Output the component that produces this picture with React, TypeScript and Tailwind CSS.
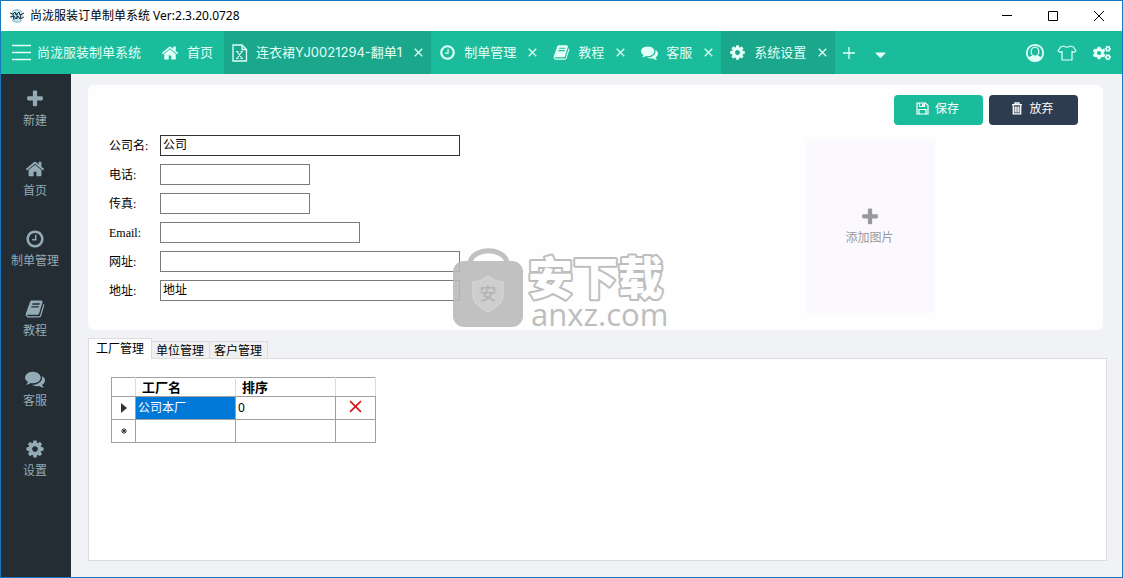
import { useState, type ReactNode } from "react";
import { FaCogs, FaCaretDown } from "react-icons/fa";

const PATHS = {
  plus: "M1600 736v192q0 40-28 68t-68 28h-416v416q0 40-28 68t-68 28h-192q-40 0-68-28t-28-68v-416h-416q-40 0-68-28t-28-68v-192q0-40 28-68t68-28h416v-416q0-40 28-68t68-28h192q40 0 68 28t28 68v416h416q40 0 68 28t28 68z",
  home: "M1472 992v480q0 26-19 45t-45 19h-384v-384h-256v384h-384q-26 0-45-19t-19-45v-480q0-1 .5-3t.5-3l575-474 575 474q1 2 1 6zm223-69l-62 74q-8 9-21 11h-3q-13 0-21-7l-692-577-692 577q-12 8-24 7-13-2-21-11l-62-74q-8-10-7-23.5t11-21.5l719-599q32-26 76-26t76 26l244 204v-195q0-14 9-23t23-9h192q14 0 23 9t9 23v408l219 182q10 8 11 21.5t-7 23.5z",
  clock: "M1024 544v448q0 14-9 23t-23 9h-320q-14 0-23-9t-9-23v-64q0-14 9-23t23-9h224v-352q0-14 9-23t23-9h64q14 0 23 9t9 23zm416 352q0-148-73-273t-198-198-273-73-273 73-198 198-73 273 73 273 198 198 273 73 273-73 198-198 73-273zm224 0q0 209-103 385.5t-279.5 279.5-385.5 103-385.5-103-279.5-279.5-103-385.5 103-385.5 279.5-279.5 385.5-103 385.5 103 279.5 279.5 103 385.5z",
  book: "M1703 478q40 57 18 129l-275 906q-19 64-76.5 107.5t-122.5 43.5h-923q-77 0-148.5-53.5t-99.5-131.5q-24-67-2-127 0-4 3-27t4-37q1-8-3-21.5t-3-19.5q2-11 8-21t16.5-23.5 16.5-23.5q23-38 45-91.5t30-91.5q3-10 .5-30t-.5-28q3-11 17-28t17-23q21-36 42-92t25-90q1-9-2.5-32t.5-28q4-13 22-30.5t22-22.5q19-26 42.5-84.5t27.5-96.5q1-8-3-25.5t-2-26.5q2-8 9-18t18-23 17-21q8-12 16.5-30.5t15-35 16-36 19.5-32 26.5-23.5 36-11.5 47.5 5.5l-1 3q38-9 51-9h761q74 0 114 56t18 130l-274 906q-36 119-71.5 153.5t-128.5 34.5h-869q-27 0-38 15-11 16-1 43 24 70 144 70h923q29 0 56-15.5t35-41.5l300-987q7-22 5-57 38 15 59 43zm-1064 2q-4 13 2 22.5t20 9.5h608q13 0 25.5-9.5t16.5-22.5l21-64q4-13-2-22.5t-20-9.5h-608q-13 0-25.5 9.5t-16.5 22.5zm-83 256q-4 13 2 22.5t20 9.5h608q13 0 25.5-9.5t16.5-22.5l21-64q4-13-2-22.5t-20-9.5h-608q-13 0-25.5 9.5t-16.5 22.5z",
  comments: "M1408 768q0 139-94 257t-256.5 186.5-353.5 68.5q-86 0-176-16-124 88-278 128-36 9-86 16h-3q-11 0-20.5-8t-11.5-21q-1-3-1-6.5t.5-6.5 2-6l2.5-5 3.5-5.5 4-5 4.5-5 4-4.5q5-6 23-25t26-29.5 22.5-29 25-38.5 20.5-44q-124-72-195-177t-71-224q0-139 94-257t256.5-186.5 353.5-68.5 353.5 68.5 256.5 186.5 94 257zm384 256q0 120-71 224.5t-195 176.5q10 24 20.5 44t25 38.5 22.5 29 26 29.5 23 25q1 1 4 4.5t4.5 5 4 5 3.5 5.5l2.500 5 2 6 .5 6.500-1 6.500q-3 14-13 22t-22 7q-50-7-86-16-154-40-278-128-90 16-176 16-271 0-472-132 58 4 88 4 161 0 309-45t264-129q125-92 192-212t67-254q0-77-23-152 129 71 204 178t75 230z",
  cog: "M1152 896q0-106-75-181t-181-75-181 75-75 181 75 181 181 75 181-75 75-181zm512-109v222q0 12-8 23t-20 13l-185 28q-19 54-39 91 35 50 107 138 10 12 10 25t-9 23q-27 37-99 108t-94 71q-12 0-26-9l-138-108q-44 23-91 38-16 136-29 186-7 28-36 28h-222q-14 0-24.5-8.5t-11.5-21.5l-28-184q-49-16-90-37l-141 107q-10 9-25 9-14 0-25-11-126-114-165-168-7-10-7-23 0-12 8-23 15-21 51-66.5t54-70.5q-27-50-41-99l-183-27q-13-2-21-12.5t-8-23.5v-222q0-12 8-23t19-13l186-28q14-46 39-92-40-57-107-138-10-12-10-24 0-10 9-23 26-36 98.5-107.5t94.5-71.5q13 0 26 10l138 107q44-23 91-38 16-136 29-186 7-28 36-28h222q14 0 24.5 8.5t11.5 21.5l28 184q49 16 90 37l142-107q9-9 24-9 13 0 25 10 129 119 165 170 7 8 7 22 0 12-8 23-15 21-51 66.5t-54 70.5q26 50 41 98l183 28q13 2 21 12.5t8 23.5z",
};

type IconName = keyof typeof PATHS;

function Icon({ name, className }: { name: IconName; className: string }) {
  return (
    <svg viewBox="0 0 1792 1792" fill="currentColor" aria-hidden="true" className={className}>
      <path d={PATHS[name]} />
    </svg>
  );
}

function Cross({ className }: { className: string }) {
  return (
    <svg viewBox="0 0 12 12" fill="none" stroke="currentColor" aria-hidden="true" className={className}>
      <path d="M1 1l10 10M11 1L1 11" />
    </svg>
  );
}

function TitleBar() {
  return (
    <header className="flex h-[30px] items-center bg-white pl-2 text-[12px] text-black">
      <svg viewBox="0 0 16 16" fill="none" aria-hidden="true" className="mr-[5px] size-4">
        <circle cx="8" cy="8" r="6.2" fill="#c4e3ee" />
        <path d="M3 3.500Q8 0 13 3.500M3 12.500Q8 16 13 12.500" stroke="#79b4cc" />
        <path d="M1 5l3 1 2-2 1 3 3-3 1 3 4-2M1 9l4-1 2 3 2-3 2 3 4-2M4 6l1 6M8 5v6M12 6l-1 5" stroke="#19323f" strokeWidth="1" />
      </svg>
      <span className="grow">尚泷服装订单制单系统 Ver:2.3.20.0728</span>
      <button type="button" aria-label="最小化" className="flex h-full w-[46px] items-center justify-center">
        <svg viewBox="0 0 10 10" className="size-[10px]" stroke="black" fill="none"><path d="M0 4.500h10" /></svg>
      </button>
      <button type="button" aria-label="最大化" className="flex h-full w-[46px] items-center justify-center">
        <svg viewBox="0 0 10 10" className="size-[10px]" stroke="black" fill="none"><path d="M.5.5h9v9h-9z" /></svg>
      </button>
      <button type="button" aria-label="关闭" className="flex h-full w-[46px] items-center justify-center">
        <Cross className="size-3" />
      </button>
    </header>
  );
}

function NavTab({ icon, label, active = false, closable = true }: { icon: ReactNode; label: string; active?: boolean; closable?: boolean }) {
  return (
    <div className={active ? "flex items-center gap-3 bg-[#1aa78b] px-2" : "flex items-center gap-3 px-2"}>
      <button type="button" className="flex items-center gap-2 whitespace-nowrap">
        {icon}
        {label}
      </button>
      {closable && (
        <button type="button" aria-label={"关闭 " + label}>
          <Cross className="size-[9px] stroke-[1.7]" />
        </button>
      )}
    </div>
  );
}

function TopNav() {
  return (
    <nav className="flex h-[43px] items-stretch bg-[#1abc9c] pl-[11px] font-['Inter','Noto_Sans_CJK_SC',sans-serif] text-[13px] text-[#e2fff8]">
      <button type="button" className="mr-3 flex items-center gap-[6px] whitespace-nowrap">
        <svg viewBox="0 0 19 18" fill="none" stroke="currentColor" strokeWidth="1.6" aria-hidden="true" className="h-[18px] w-[19px]">
          <path d="M0 1.500h19M0 8.500h19M0 15.500h19" />
        </svg>
        尚泷服装制单系统
      </button>
      <NavTab closable={false} icon={<Icon name="home" className="size-[18px]" />} label="首页" />
      <div className="w-[3px]" />
      <NavTab
        active
        icon={
          <svg viewBox="0 0 16 18" fill="none" stroke="currentColor" strokeWidth="1.300" aria-hidden="true" className="h-[18px] w-4">
            <path d="M1 1h9l4.500 4.500V17H1zM10 1v4.500h4.500" />
            <path d="M5 7.500l5 7M10 7.500l-5 7M4 7.500h2.400M8.600 7.500H11M4 14.500h2.400M8.600 14.500H11" strokeWidth="1.100" />
          </svg>
        }
        label="连衣裙YJ0021294-翻单1"
      />
      <NavTab icon={<Icon name="clock" className="size-[17px]" />} label="制单管理" />
      <NavTab icon={<Icon name="book" className="size-[17px]" />} label="教程" />
      <NavTab icon={<Icon name="comments" className="size-[17px]" />} label="客服" />
      <NavTab active icon={<Icon name="cog" className="size-[17px]" />} label="系统设置" />
      <button type="button" aria-label="新建标签" className="px-2">
        <svg viewBox="0 0 12 12" fill="none" stroke="currentColor" strokeWidth="1.300" className="size-3"><path d="M6 0v12M0 6h12" /></svg>
      </button>
      <button type="button" aria-label="更多标签" className="px-[9px] pt-1">
        <FaCaretDown className="size-[17px]" />
      </button>
      <div className="ml-auto flex items-center gap-3 pr-[11px]">
        <button type="button" aria-label="用户">
          <svg viewBox="0 0 20 20" fill="none" stroke="currentColor" className="size-5">
            <circle cx="10" cy="10" r="8.2" strokeWidth="1.800" />
            <path d="M3.200 14.800c1.500-1.700 3.800-1.500 4.800-2.500h4c1 1 3.300.8 4.800 2.500-3.300 4.400-10.300 4.400-13.600 0z" fill="currentColor" stroke="none" />
            <ellipse cx="10" cy="8.700" rx="3.800" ry="4.500" fill="#1abc9c" strokeWidth="1.300" />
          </svg>
        </button>
        <button type="button" aria-label="主题">
          <svg viewBox="0 0 20 18" fill="none" stroke="currentColor" strokeWidth="1.200" strokeLinejoin="round" className="h-[18px] w-5">
            <path d="M7 2c1 1.600 5 1.600 6 0l3.500 1 2.500 4-2.700 1.500-1.300-1V16H5V7.500l-1.300 1L1 7l2.500-4z" />
          </svg>
        </button>
        <button type="button" aria-label="系统选项" className="ml-1">
          <FaCogs className="size-[18px]" />
        </button>
      </div>
    </nav>
  );
}

const SIDE: { icon: IconName; label: string }[] = [
  { icon: "plus", label: "新建" },
  { icon: "home", label: "首页" },
  { icon: "clock", label: "制单管理" },
  { icon: "book", label: "教程" },
  { icon: "comments", label: "客服" },
  { icon: "cog", label: "设置" },
];

function Sidebar() {
  return (
    <aside className="w-[70px] shrink-0 bg-[#242d33] pr-[2px] text-[12px] text-[#93abb6]">
      {SIDE.map((s) => (
        <a key={s.label} href="#" className="flex h-[70px] flex-col items-center gap-[3px] pt-[15px] leading-[18px]">
          <Icon name={s.icon} className="size-5" />
          <span>{s.label}</span>
        </a>
      ))}
    </aside>
  );
}

const FIELDS = [
  { id: "company", label: "公司名:", value: "公司", cls: "w-[300px] border-[#333]" },
  { id: "phone", label: "电话:", value: "", cls: "w-[150px] border-[#7a7a7a]" },
  { id: "fax", label: "传真:", value: "", cls: "w-[150px] border-[#7a7a7a]" },
  { id: "email", label: "Email:", value: "", cls: "w-[200px] border-[#7a7a7a]" },
  { id: "site", label: "网址:", value: "", cls: "w-[300px] border-[#7a7a7a]" },
  { id: "address", label: "地址:", value: "地址", cls: "w-[300px] border-[#7a7a7a]" },
];

function CompanyCard() {
  return (
    <section className="mr-1 flex justify-between rounded-md bg-[#fefefe] pt-[10px] pr-[25px] pb-[17px] pl-[21px]">
      <form className="flex flex-col gap-2 pt-10 font-['Liberation_Serif','Noto_Sans_CJK_SC',serif] text-[12px] text-black">
        {FIELDS.map((f) => (
          <div key={f.id} className="flex h-[21px] items-center">
            <label htmlFor={f.id} className="w-[51px]">{f.label}</label>
            <input id={f.id} defaultValue={f.value} className={"h-[21px] border bg-white px-[2px] pb-[3px] " + f.cls} />
          </div>
        ))}
      </form>
      <div className="flex w-[272px] flex-col gap-[15px]">
        <div className="flex justify-end gap-[6px] text-[12px] text-white">
          <button type="button" className="flex h-[30px] w-[89px] items-center justify-center gap-[6px] rounded-[4px] bg-[#1abc9c] pr-[2px] pb-[3px]">
            <svg viewBox="0 0 13 13" fill="none" stroke="currentColor" strokeWidth="1.200" aria-hidden="true" className="size-[13px]">
              <path d="M1 1h8.500L12 3.500V12H1zM3.500 1v3.500h5V1M3 12V7.500h7V12" />
              <path d="M6.800 1.500v2.500" strokeWidth="1.600" />
            </svg>
            保存
          </button>
          <button type="button" className="flex h-[30px] w-[89px] items-center justify-center gap-[6px] rounded-[4px] bg-[#2d3c50] pr-[2px] pb-[3px]">
            <svg viewBox="0 0 12 13" fill="none" stroke="currentColor" strokeWidth="1.300" aria-hidden="true" className="h-[13px] w-3">
              <path d="M1 2.700h10M4 2.500V1h4v1.500M2.300 3v8.800h7.400V3M4.200 4.500v6M6 4.500v6M7.800 4.500v6" />
            </svg>
            放弃
          </button>
        </div>
        <button type="button" className="flex h-[173px] w-[129px] flex-col items-center justify-center gap-[2px] bg-[#fbf9fd] pr-[2px] text-[12px] text-[#999]">
          <Icon name="plus" className="size-5" />
          添加图片
        </button>
      </div>
    </section>
  );
}

function FactoryTable() {
  const cell = "border border-[#a0a0a0] p-0 px-[2px]";
  const head = "border-y border-[#a0a0a0] border-r border-r-[#dcdcdc] p-0 px-[6px] text-left text-[13px] font-bold";
  return (
    <table className="w-[265px] table-fixed border-collapse bg-white text-[12px] leading-[18px] text-black">
      <colgroup>
        <col className="w-6" />
        <col className="w-[100px]" />
        <col className="w-[100px]" />
        <col className="w-10" />
      </colgroup>
      <thead>
        <tr className="h-[19px]">
          <th className={head + " border-l border-l-[#a0a0a0]"} />
          <th className={head}>工厂名</th>
          <th className={head}>排序</th>
          <th className={head} />
        </tr>
      </thead>
      <tbody>
        <tr className="h-[23px]">
          <td className={cell}>
            <svg viewBox="0 0 6 10" fill="#333" aria-hidden="true" className="mx-auto h-[10px] w-[6px]"><path d="M0 0l6 5-6 5z" /></svg>
          </td>
          <td className={cell + " bg-[#0078d7] text-white"}>公司本厂</td>
          <td className={cell}>0</td>
          <td className={cell + " pb-1"}>
            <button type="button" aria-label="删除" className="mx-auto block text-[#d8161c]">
              <Cross className="size-[13px] stroke-[1.500]" />
            </button>
          </td>
        </tr>
        <tr className="h-[23px]">
          <td className={cell}>
            <svg viewBox="0 0 6 6" stroke="#333" aria-hidden="true" className="mx-auto size-[6px]"><path d="M3 0v6M0 3h6M1 1l4 4M5 1L1 5" /></svg>
          </td>
          <td className={cell} />
          <td className={cell} />
          <td className={cell} />
        </tr>
      </tbody>
    </table>
  );
}

const TABS = ["工厂管理", "单位管理", "客户管理"];

function ManagePanel() {
  const [tab, setTab] = useState(0);
  return (
    <section className="mt-2 flex grow flex-col text-[12px] text-black">
      <div role="tablist" className="flex items-end">
        {TABS.map((t, i) => (
          <button
            key={t}
            type="button"
            role="tab"
            aria-selected={tab === i}
            onClick={() => setTab(i)}
            className={
              tab === i
                ? "z-10 -mb-px h-[21px] border border-b-0 border-[#dcdcdc] bg-[#fefefe] px-[7px]"
                : "h-[17px] border border-b-0 border-l-0 border-[#dcdcdc] bg-[#f0f0f0] pr-[5px] pl-1"
            }
          >
            {t}
          </button>
        ))}
      </div>
      <div role="tabpanel" className="grow border border-[#dcdcdc] bg-[#fefefe] pt-[18px] pb-4 pl-[22px]">
        <FactoryTable />
      </div>
    </section>
  );
}

function Watermark() {
  return (
    <div className="pointer-events-none absolute top-[246px] left-[452px] z-20 flex items-end gap-1">
      <svg viewBox="0 0 70 80" aria-hidden="true" className="h-20 w-[70px]">
        <path d="M17 14.500A19 14 0 0 1 54 14.500" fill="none" stroke="#b8b8b8" strokeWidth="5" opacity="0.880" />
        <rect y="14" width="70" height="66" rx="11" fill="#b8b8b8" opacity="0.880" />
        <path d="M35 29q7 6 15 6v14q0 9-15 16-15-7-15-16V35q8 0 15-6z" fill="#cecece" stroke="#dadada" />
        <text x="35" y="53" textAnchor="middle" fontSize="17" fontWeight="500" fill="#b4b4b4">安</text>
      </svg>
      <div className="flex flex-col">
        <svg viewBox="0 0 140 52" aria-hidden="true" className="h-[52px] w-[140px] overflow-visible">
          <text x="1" y="44" fontSize="45" fontWeight="900" fill="#fefefe" stroke="#bdbdbd" strokeWidth="4" strokeLinejoin="round" paintOrder="stroke">安下载</text>
        </svg>
        <span className="h-6 pl-1 font-['Open_Sans',sans-serif] text-[31px] leading-[22px] font-medium text-[#bdbdbd]">anxz.com</span>
      </div>
    </div>
  );
}

export default function App() {
  return (
    <div className="relative flex min-h-screen flex-col border border-[#1877bd] bg-[#f0f2f6] font-['Noto_Sans','Noto_Sans_CJK_SC',sans-serif]">
      <TitleBar />
      <TopNav />
      <div className="flex grow">
        <Sidebar />
        <main className="flex grow flex-col pt-[11px] pr-[15px] pb-4 pl-[17px]">
          <CompanyCard />
          <ManagePanel />
        </main>
      </div>
      <Watermark />
    </div>
  );
}
